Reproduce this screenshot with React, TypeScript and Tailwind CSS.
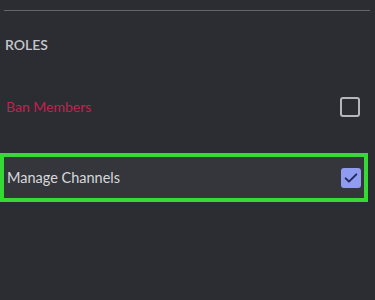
export default function App() {
  return (
    <div
      className="w-[375px] h-[300px] bg-[#2c2d32] flex flex-col overflow-hidden"
      style={{ fontFamily: 'Lato, "Open Sans", sans-serif' }}
    >
      {/* divider */}
      <div className="mt-[10px] ml-[4px] w-[366px] h-px bg-[#65666b]" />

      {/* section title */}
      <div className="mt-[26px] pl-[5px] h-[16px] leading-[16px] text-[14px] font-semibold text-[#c4c6ca]">
        ROLES
      </div>

      {/* permission: ban */}
      <div className="mt-[29px] w-[368px] h-[49px] flex items-center justify-between pl-[6px] pr-[8px]">
        <span className="text-[14px] text-[#c61f50]">Ban Members</span>
        <span className="w-[20px] h-[20px] rounded-[3px] border-2 border-[#b5b7bc]" />
      </div>

      {/* permission: manage channels (highlighted) */}
      <div className="mt-[22px] w-[368px] h-[49px] flex items-center justify-between border-4 border-[#36d936] bg-[#35363c] pl-[3px] pr-[3px]">
        <span className="text-[14.5px] text-[#d7d8dc]">Manage Channels</span>
        <span className="w-[20px] h-[20px] rounded-[3px] bg-[#8f9cf0] flex items-center justify-center">
          <svg width="16" height="16" viewBox="0 0 24 24" fill="none">
            <path d="M4 12.5l5 5L20 6.5" stroke="#222a5e" strokeWidth="3" strokeLinecap="round" strokeLinejoin="round" />
          </svg>
        </span>
      </div>
    </div>
  );
}
